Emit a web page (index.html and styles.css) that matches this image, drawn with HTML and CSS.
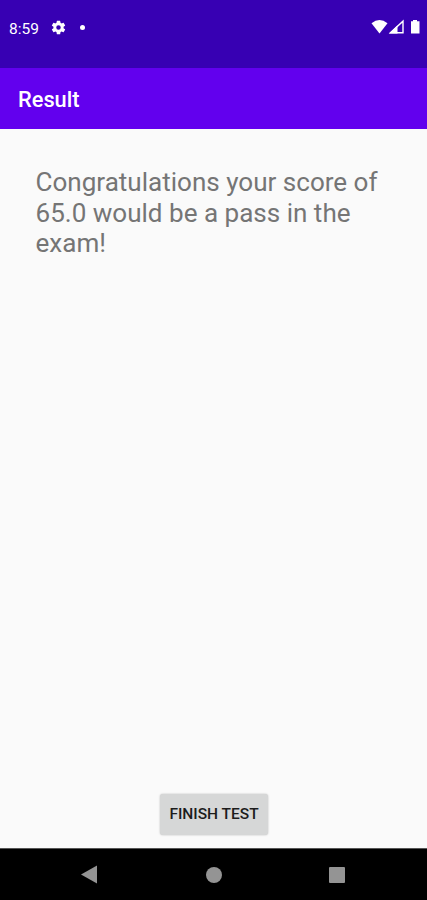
FILE: index.html
```html
<!DOCTYPE html>
<html lang="en">
<head>
<meta charset="utf-8">
<title>Result</title>
<link rel="stylesheet" href="styles.css">
</head>
<body>
<div class="screen">
  <header class="status">
    <div class="status-left">
      <span class="clock">8:59</span>
      <svg class="gear" viewBox="0 0 24 24"><path fill="#fff" d="M19.14 12.94c.04-.3.06-.61.06-.94s-.02-.64-.07-.94l2.03-1.58a.49.49 0 0 0 .12-.61l-1.92-3.32a.49.49 0 0 0-.59-.22l-2.39.96a7 7 0 0 0-1.62-.94l-.36-2.54a.48.48 0 0 0-.48-.41h-3.84a.48.48 0 0 0-.47.41l-.36 2.54c-.59.24-1.13.57-1.62.94l-2.39-.96a.48.48 0 0 0-.59.22L2.74 8.87a.48.48 0 0 0 .12.61l2.03 1.58a6 6 0 0 0 0 1.88l-2.03 1.58a.49.49 0 0 0-.12.61l1.92 3.32c.12.22.37.29.59.22l2.39-.96c.5.38 1.03.7 1.62.94l.36 2.54c.05.24.24.41.48.41h3.84c.24 0 .44-.17.47-.41l.36-2.54a7 7 0 0 0 1.62-.94l2.39.96c.22.08.47 0 .59-.22l1.92-3.32a.48.48 0 0 0-.12-.61zM12 15.2a3.2 3.2 0 1 1 0-6.4 3.2 3.2 0 0 1 0 6.4z"/></svg>
      <span class="dot"></span>
    </div>
    <svg class="signals" viewBox="0 0 50 16"><path fill="#fff" d="M.5 4.3Q8.500-2.300 16.500 4.300L8.500 14.500z"/><path fill="none" stroke="#fff" stroke-width="1.400" d="M19.500 13.700 32 2.200v11.500z"/><path fill="#fff" d="m18 14.400 8.500-8.200v8.200z"/><path fill="#fff" d="M40 2.300h2V1h4v1.300h2.500v12.200H40z"/></svg>
  </header>
  <div class="appbar"><h1>Result</h1></div>
  <main>
    <p>Congratulations your score of<br>65.0 would be a pass in the<br>exam!</p>
    <button>FINISH TEST</button>
  </main>
  <nav>
    <svg class="back" viewBox="0 0 16 18"><path fill="#949494" d="M16 0v18L0 9z"/></svg>
    <span class="home"></span>
    <span class="recent"></span>
  </nav>
</div>
</body>
</html>
```

FILE: styles.css
```css
* { box-sizing: border-box; }
body { margin: 0; font-family: Roboto, sans-serif; }
.screen { width: 427px; height: 900px; display: flex; flex-direction: column; background: #fafafa; overflow: hidden; }
.status { height: 68px; background: #3700b3; padding: 19px 6px 0 9px; display: flex; justify-content: space-between; align-items: flex-start; }
.status-left { display: flex; align-items: center; height: 17px; color: #fff; }
.clock { font-size: 15.5px; line-height: 18px; padding-top: 2px; width: 41px; white-space: nowrap; }
.gear { width: 17px; height: 17px; }
.dot { width: 5px; height: 5px; border-radius: 50%; background: #fff; margin-left: 13px; }
.signals { width: 50px; height: 16px; }
.appbar { height: 60.5px; background: #6200ee; padding: 0 18px; display: flex; align-items: center; }
h1 { margin: 3px 0 0; color: #fff; font-size: 21.8px; line-height: 26px; font-weight: 500; }
main { flex: 1; padding: 38.5px 35px 13px; display: flex; flex-direction: column; justify-content: space-between; align-items: center; }
p { margin: 0; align-self: stretch; padding-left: 0.5px; white-space: nowrap; color: #757575; font-size: 26.05px; line-height: 30.5px; }
button { width: 108px; height: 41px; margin-left: 1px; padding: 0 0 1px; border: 0; border-radius: 3px; background: #d6d7d7; color: #1c1c1c; font: 500 15.5px/18px Roboto, sans-serif; box-shadow: 0 0 2px #0004; white-space: nowrap; }
nav { height: 52px; background: #000; border-top: 1px solid #555; display: flex; align-items: center; padding-left: 81px; }
.back { width: 16px; height: 19px; }
.home { width: 16px; height: 16px; border-radius: 50%; background: #949494; margin-left: 109px; }
.recent { width: 16px; height: 16px; border-radius: 1px; background: #949494; margin-left: 107px; }
```
